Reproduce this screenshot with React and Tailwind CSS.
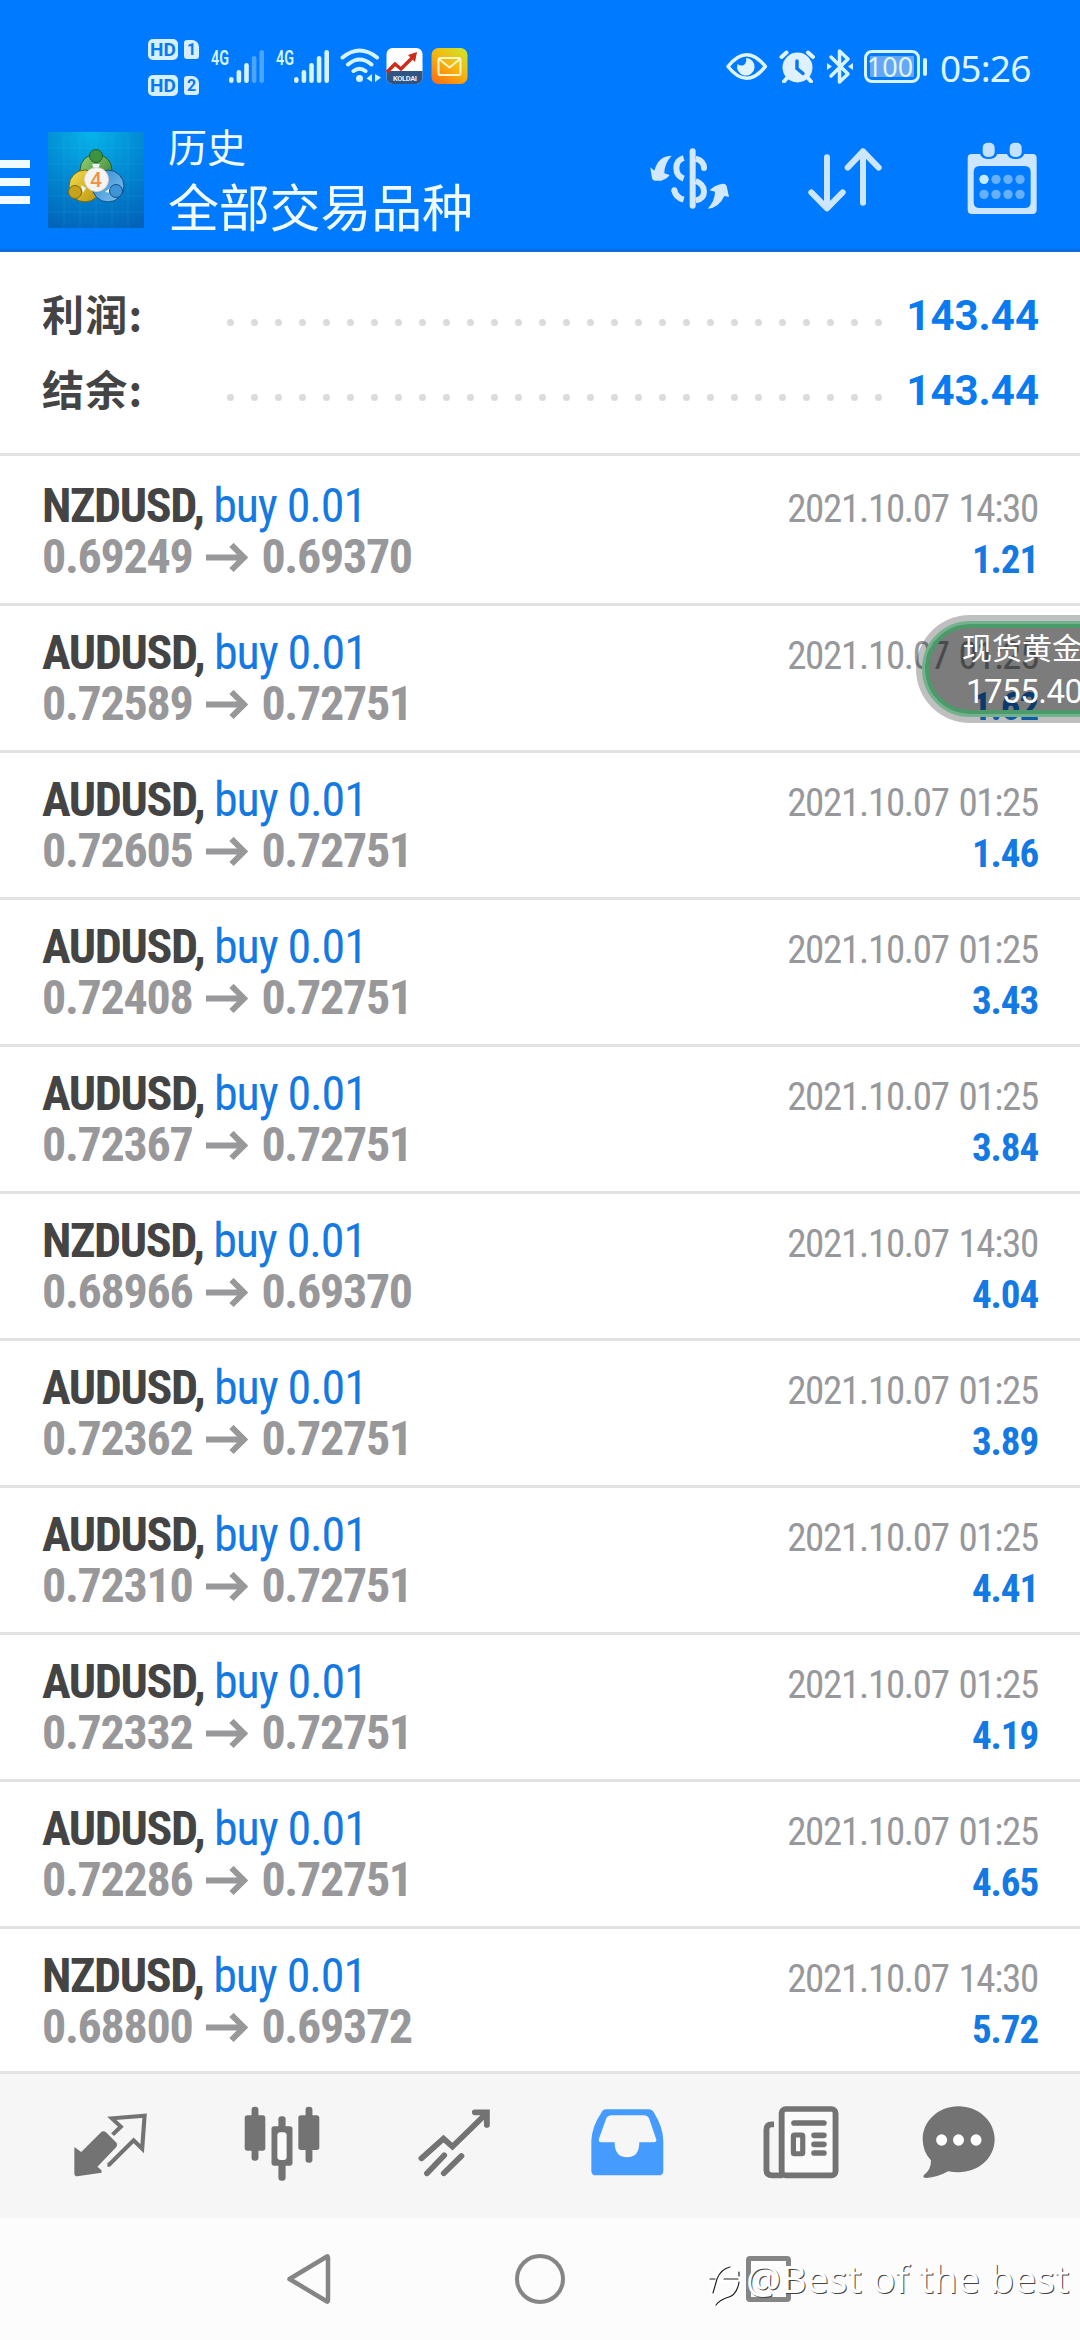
import React from 'react'

const deals = [
  { symbol: 'NZDUSD', open: '0.69249', close: '0.69370', time: '2021.10.07 14:30', profit: '1.21' },
  { symbol: 'AUDUSD', open: '0.72589', close: '0.72751', time: '2021.10.07 01:25', profit: '1.62' },
  { symbol: 'AUDUSD', open: '0.72605', close: '0.72751', time: '2021.10.07 01:25', profit: '1.46' },
  { symbol: 'AUDUSD', open: '0.72408', close: '0.72751', time: '2021.10.07 01:25', profit: '3.43' },
  { symbol: 'AUDUSD', open: '0.72367', close: '0.72751', time: '2021.10.07 01:25', profit: '3.84' },
  { symbol: 'NZDUSD', open: '0.68966', close: '0.69370', time: '2021.10.07 14:30', profit: '4.04' },
  { symbol: 'AUDUSD', open: '0.72362', close: '0.72751', time: '2021.10.07 01:25', profit: '3.89' },
  { symbol: 'AUDUSD', open: '0.72310', close: '0.72751', time: '2021.10.07 01:25', profit: '4.41' },
  { symbol: 'AUDUSD', open: '0.72332', close: '0.72751', time: '2021.10.07 01:25', profit: '4.19' },
  { symbol: 'AUDUSD', open: '0.72286', close: '0.72751', time: '2021.10.07 01:25', profit: '4.65' },
  { symbol: 'NZDUSD', open: '0.68800', close: '0.69372', time: '2021.10.07 14:30', profit: '5.72' },
]

const SimBadge = ({ slot }) => (
  <div className="flex items-center gap-[6px] h-[22px]">
    <span className="w-[30px] h-[21px] rounded-[5px] bg-[#d6efff] text-[#0a78f0] text-[19px] leading-[21px] font-bold text-center">HD</span>
    <span className="w-[15px] h-[19px] rounded-[3px] rounded-tr-[7px] bg-[#d6efff] text-[#0a78f0] text-[16px] leading-[19px] font-bold text-center">{slot}</span>
  </div>
)

const Signal = ({ level }) => (
  <svg className="w-[54px] h-[34px] overflow-visible" viewBox="0 0 54 34">
    <text x="0" y="15.5" fontSize="20" fontWeight="600" textLength="18" lengthAdjust="spacingAndGlyphs" fill="#d6f4ff">4G</text>
    {[6, 13, 20, 27, 33].map((h, i) => (
      <rect key={h} x={18 + i * 7.6} y={34 - h} width="4.6" height={h} rx="2.3" fill="#d6f4ff" opacity={i < level ? 1 : 0.35} />
    ))}
  </svg>
)

const StatusBar = () => (
  <div className="h-[112px] flex items-start text-[#dff4ff]">
    <div className="ml-[148px] mt-[38px] flex flex-col gap-[14px]">
      <SimBadge slot="1" />
      <SimBadge slot="2" />
    </div>
    <div className="ml-[12px] mt-[49px]"><Signal level={3} /></div>
    <div className="ml-[11px] mt-[49px]"><Signal level={5} /></div>
    {/* Wi-Fi */}
    <svg className="ml-[10px] mt-[48px] w-[41px] h-[35px]" viewBox="0 0 41 35" fill="none" stroke="#d6f4ff" strokeWidth="4" strokeLinecap="round">
      <path d="M2.500 9.500Q19.500-4.500 37 9.500M8 16.500Q19.500 6.500 31.500 16.500M13.500 23Q19.500 18.500 25.500 23" />
      <circle cx="19.500" cy="30.500" r="3.500" fill="#d6f4ff" stroke="none" />
      <path d="M32 26v8l-5.500-3.500zM35 34v-8l6 3.500z" stroke="none" fill="#d6f4ff" />
    </svg>
    {/* Notification icons */}
    <svg className="ml-[5px] mt-[48px] w-[37px] h-[37px]" viewBox="0 0 37 37">
      <rect x="0.500" y="0" width="36" height="36" rx="6" fill="#fff" />
      <path d="M.5 23h36v7a6 6 0 0 1-6 6h-24a6 6 0 0 1-6-6z" fill="#315583" />
      <path d="M1 24l8-8 6 5 12-12" fill="none" stroke="#cf2b1d" strokeWidth="3.500" />
      <path d="M22 7l9-3-2 10z" fill="#cf2b1d" />
      <text x="7" y="32.500" fontSize="7.500" fontWeight="700" fill="#e5edf5" textLength="24">KOLDAI</text>
    </svg>
    <svg className="ml-[8px] mt-[48px] w-[37px] h-[37px]" viewBox="0 0 37 37">
      <defs>
        <linearGradient id="mail" x1="0.200" y1="1" x2="0.900" y2="0">
          <stop offset="0" stopColor="#ff7412" />
          <stop offset="0.500" stopColor="#f7b40e" />
          <stop offset="1" stopColor="#cbe62a" />
        </linearGradient>
      </defs>
      <rect x="0.500" y="0" width="36" height="36" rx="7" fill="url(#mail)" />
      <rect x="7.500" y="10" width="22" height="17" rx="2" fill="none" stroke="#fff6c8" strokeWidth="2" />
      <path d="M8 11l10.500 8.500L29 11" fill="none" stroke="#fff6c8" strokeWidth="2" />
    </svg>
    {/* Eye comfort */}
    <svg className="ml-[258px] mt-[52px] w-[42px] h-[29px]" viewBox="0 0 42 29">
      <path d="M2 14.500Q20.500-9 39.500 14.500Q20.500 38 2 14.500z" fill="none" stroke="#dff4ff" strokeWidth="3.500" strokeLinejoin="round" />
      <path d="M20 6A8.800 8.800 0 1 1 11.500 12Q16 15 19 12Q21 9 20 6z" fill="#dff4ff" />
    </svg>
    {/* Alarm */}
    <svg className="ml-[11px] mt-[49px] w-[37px] h-[34px]" viewBox="0 0 37 34" fill="none" strokeLinecap="round">
      <circle cx="18.500" cy="18.500" r="15" fill="#dff0ff" />
      <path d="M2.500 8l5-4.500M34 8l-5-4.500M8 29l-3 3.500M29 29l3 3.500" stroke="#dff4ff" strokeWidth="4" />
      <path d="M18 12v7.500l6 5" stroke="#0a78f0" strokeWidth="3.500" />
    </svg>
    {/* Bluetooth */}
    <svg className="ml-[10px] mt-[48px] w-[28px] h-[37px]" viewBox="0 0 28 37">
      <path d="M5 9l17 17-8.500 8V3l8.500 8L5 28" fill="none" stroke="#d6f4ff" strokeWidth="3.500" strokeLinejoin="round" strokeLinecap="round" />
      <path d="M1 15l5 3.500-5 3.500zM27 15l-5 3.500 5 3.500z" fill="#d6f4ff" />
    </svg>
    {/* Battery */}
    <div className="ml-[10px] mt-[50px] flex items-center">
      <div className="w-[56px] h-[33px] p-[3px] rounded-[8px] border-[3px] border-[#d6f4ff]">
        <div className="h-full bg-[#64a8f4] text-[27px] leading-[22px] text-center font-['Noto_Sans',sans-serif]">
          <span className="inline-block -ml-1">100</span>
        </div>
      </div>
      <div className="ml-[3px] w-[4px] h-[18px] rounded-full bg-[#d6f4ff]" />
    </div>
    <span className="ml-[13px] mt-[44px] text-[37px] leading-[48px] tracking-[-0.8px] font-['Noto_Sans',sans-serif]">05:26</span>
  </div>
)

const AppLogo = () => (
  <svg className="w-[96px] h-[96px]" viewBox="0 0 96 96">
    <defs>
      <radialGradient id="sky" cx="0.450" cy="0" r="1.100">
        <stop offset="0" stopColor="#06b4ea" />
        <stop offset="0.550" stopColor="#0284cf" />
        <stop offset="1" stopColor="#0262b8" />
      </radialGradient>
      <linearGradient id="green" x1="0" y1="0" x2="1" y2="1">
        <stop offset="0" stopColor="#9bd27c" />
        <stop offset="1" stopColor="#2b7c28" />
      </linearGradient>
      <linearGradient id="gold" x1="0" y1="0" x2="1" y2="1">
        <stop offset="0" stopColor="#f5e04c" />
        <stop offset="1" stopColor="#b8900f" />
      </linearGradient>
      <linearGradient id="azure" x1="0" y1="0" x2="1" y2="1">
        <stop offset="0" stopColor="#2f86cf" />
        <stop offset="1" stopColor="#82c4ef" />
      </linearGradient>
    </defs>
    <rect width="96" height="96" fill="url(#sky)" />
    <path d="M16 0v96M32 0v96M48 0v96M64 0v96M80 0v96M0 16h96M0 32h96M0 48h96M0 64h96M0 80h96" stroke="#5cc4f4" strokeOpacity="0.120" />
    <circle cx="48" cy="38" r="16" fill="url(#green)" stroke="#1f5d33" />
    <circle cx="37" cy="54" r="16" fill="url(#gold)" stroke="#6e6418" />
    <circle cx="60" cy="54" r="16" fill="url(#azure)" stroke="#124d86" />
    <path d="M44 32h8l-2 5h-4zM33 53l5 3-3 5zM57 60l6-5v6z" fill="#eaf6ff" />
    <circle cx="48" cy="24" r="6.500" fill="#3d9440" stroke="#1f5d33" />
    <circle cx="27" cy="60" r="6.500" fill="#c9a21c" stroke="#7a6a14" />
    <circle cx="68" cy="59" r="6.500" fill="#3f94d8" stroke="#124d86" />
    <circle cx="48.500" cy="47.500" r="12" fill="#f6f4f2" stroke="#d9d4cf" />
    <text x="48" y="55" fontSize="21" fontWeight="500" textAnchor="middle" fill="#ee9347">4</text>
  </svg>
)

const AppBar = () => (
  <div className="h-[137px] flex items-start">
    <div className="mt-[48px] w-[30px] flex flex-col gap-[10px]">
      <div className="h-[8px] bg-[#f0fbff]" />
      <div className="h-[8px] bg-[#f0fbff]" />
      <div className="h-[8px] bg-[#f0fbff]" />
    </div>
    <div className="ml-[18px] mt-[20px]"><AppLogo /></div>
    <div className="ml-[24px] mt-[4px] w-[320px] flex flex-col text-[#f0fbff] font-['Noto_Sans_CJK_SC',sans-serif]">
      <span className="text-[39px] leading-[58px]">历史</span>
      <span className="text-[51px] leading-[62px] tracking-[-0.2px]">全部交易品种</span>
    </div>
    {/* Currency filter */}
    <svg className="ml-[161px] mt-[34px] w-[82px] h-[66px]" viewBox="88 106 246 198" fill="#d2e8ff">
      <path d="M156 135Q116 135 104 180L92 170L97 203Q99 210 106 210L125 210Q143 204 150 193L134 188Q134 158 156 135z" />
      <path d="M264 294Q298 292 314 256L328 259L321 226Q318 218 309 219Q282 224 270 239L286 243Q286 270 264 294z" />
      <rect x="210" y="113" width="18" height="181" rx="9" />
      <path d="M192 142Q170 149 170 172Q170 196 192 204M228 144Q253 151 253 172M228 211Q253 220 253 243Q253 264 228 269M164 239Q168 260 192 267" fill="none" stroke="#d2e8ff" strokeWidth="18" />
      <circle cx="253" cy="172" r="9" />
      <circle cx="164" cy="239" r="9" />
    </svg>
    {/* Sort */}
    <svg className="ml-[76px] mt-[35px] w-[76px] h-[66px]" viewBox="564 109 228 198" fill="none" stroke="#cde6ff" strokeWidth="18" strokeLinecap="round" strokeLinejoin="round">
      <path d="M624 140V293M577 245L624 293L671 245M732 276V122M686 171L732 122L779 171" />
    </svg>
    {/* Calendar */}
    <svg className="ml-[84px] mt-[30px] w-[70px] h-[73px]" viewBox="1042 96 210 219">
      <path fillRule="evenodd" fill="#cde6ff" d="M1056 132H1081Q1086 147 1107 147Q1128 147 1133 132H1162Q1167 147 1188 147Q1208 147 1214 132H1239Q1251 132 1251 144V299Q1251 312 1238 312H1057Q1044 312 1044 299V144Q1044 132 1056 132zM1080 168Q1062 168 1062 186V276Q1062 294 1080 294H1215Q1233 294 1233 276V186Q1233 168 1215 168z" />
      <rect x="1089" y="98" width="36" height="43" rx="15" fill="#c4e1ff" />
      <rect x="1170" y="98" width="36" height="43" rx="15" fill="#c4e1ff" />
      {[0, 1, 2, 3].map((i) => (
        <g key={i} fill="#66b0ff">
          <circle cx={1093 + i * 36} cy="208" r="14" fill={i === 0 ? '#c4ecff' : '#66b0ff'} />
          <circle cx={1093 + i * 36} cy="253" r="14" />
        </g>
      ))}
    </svg>
  </div>
)

const SummaryRow = ({ label, value }) => (
  <div className="h-[75px] flex items-center">
    <span className="w-[185px] -mt-[4px] text-[42px] leading-[75px] font-bold tracking-[1.2px] text-[#444] font-['Noto_Sans_CJK_SC',sans-serif]">{label}</span>
    <div className="w-[655px] mt-[16px] flex justify-between">
      {Array.from({ length: 28 }, (_, i) => (
        <span key={i} className="w-[7px] h-[7px] rounded-full bg-[#dcdcdc]" />
      ))}
    </div>
    <span className="ml-auto -mr-[1px] mt-[2px] text-[42px] leading-[75px] font-bold text-[#097bf0]">{value}</span>
  </div>
)

const DealRow = ({ deal }) => (
  <div className="h-[147px] shrink-0 pt-[21px] px-[42px] border-b-[3px] border-[#e2e2e2] font-stretch-condensed">
    <div className="h-[51px] flex items-baseline justify-between leading-[51px]">
      <span className="text-[48px] font-bold tracking-[-1.4px] text-[#444]">
        {deal.symbol}, <span className="font-normal tracking-[-1.1px] text-[#1479e2]">buy 0.01</span>
      </span>
      <span className="text-[39px] tracking-[-1.3px] [word-spacing:2px] text-[#97989b]">{deal.time}</span>
    </div>
    <div className="h-[51px] flex items-baseline justify-between leading-[51px]">
      <span className="text-[48px] font-bold tracking-[-1.3px] text-[#98989a]">
        {deal.open}
        <svg className="inline-block ml-[14px] mr-[13px] w-[42px] h-[30px] align-baseline" viewBox="0 0 42 30" fill="none" stroke="currentColor" strokeWidth="6">
          <path d="M0 14.500H38M25.500 2L38 14.500L25.500 27" />
        </svg>
        {deal.close}
      </span>
      <span className="text-[39px] font-bold tracking-[-1.1px] text-[#1479e2]">{deal.profit}</span>
    </div>
  </div>
)

const QuoteBubble = () => (
  <div className="absolute left-[916px] top-[615px] w-[240px] h-[108px] rounded-full bg-black/25 p-[6px]">
    <div className="h-full rounded-full border-[3px] border-[#73b28d]">
      <div className="h-full rounded-full border-[4px] border-[#4b9b6a] bg-black/35 pl-[33px] text-white whitespace-nowrap">
        <div className="text-[30px] leading-[37px] font-['Noto_Sans_CJK_SC',sans-serif]">现货黄金</div>
        <div className="ml-[4px] text-[33px] leading-[53px] tracking-[-0.5px]">1755.40</div>
      </div>
    </div>
  </div>
)

const TabBar = () => (
  <div className="h-[147px] shrink-0 border-t-[3px] border-[#e4e4e4] bg-[#f6f6f6] flex items-start text-[#737373]">
    {/* Quotes */}
    <svg className="ml-[74px] mt-[38px] w-[73px] h-[66px]" viewBox="214 215 212 198" preserveAspectRatio="none">
      <path d="M215 320L235 335L291 277Q299 269 307 276L338 308Q341 314 337 320L282 379L294 390V397L223 408Q215 407 215 400z" fill="currentColor" />
      <path d="M311 373H316L387 300L412 325L419 226L324 234L350 259L326 283" fill="none" stroke="currentColor" strokeWidth="12" />
    </svg>
    {/* Charts */}
    <svg className="ml-[97px] mt-[32px] w-[76px] h-[76px]" viewBox="707 199 221 228" preserveAspectRatio="none" fill="currentColor">
      <rect x="729" y="201" width="20" height="162" rx="9" />
      <rect x="709" y="227" width="60" height="106" rx="8" />
      <rect x="886" y="201" width="20" height="168" rx="9" />
      <rect x="865" y="227" width="61" height="104" rx="8" />
      <rect x="807" y="230" width="21" height="193" rx="9" />
      <rect x="787" y="260" width="61" height="118" rx="8" />
      <rect x="804" y="278" width="27" height="83" rx="9" fill="#fbfbfb" />
    </svg>
    {/* Trade */}
    <svg className="ml-[98px] mt-[35px] w-[73px] h-[68px]" viewBox="1211 208 212 204" preserveAspectRatio="none" fill="none" stroke="currentColor" strokeLinecap="round">
      <path d="M1221 356L1285 297L1311 321L1411 220M1376 218H1411V256" strokeWidth="17" />
      <path d="M1237 401L1287 347M1286 401L1337 349" strokeWidth="17" />
    </svg>
    {/* History, the active tab */}
    <svg className="ml-[100px] mt-[35px] w-[73px] h-[67px]" viewBox="145 209 213 201" preserveAspectRatio="none">
      <path fillRule="evenodd" fill="#459cfe" d="M189 210H312Q323 210 329 220Q356 265 356 305V394Q356 408 342 408H160Q146 408 146 394V305Q147 263 175 220Q180 210 189 210zM205 228Q193 228 189 239L168 299Q166 309 175 309H214Q214 354 250 354Q286 354 286 309H328Q338 309 335 299L315 239Q311 228 299 228z" />
    </svg>
    {/* News */}
    <svg className="ml-[99px] mt-[32px] w-[76px] h-[73px]" viewBox="645 200 220 219" preserveAspectRatio="none" fill="none" stroke="currentColor" strokeWidth="17">
      <rect x="699" y="209" width="156" height="199" rx="12" fill="#fbfbfb" />
      <path d="M677 255H670Q655 255 655 272V392Q655 408 672 408H702" />
      <path d="M735 251H821M793 288H821M793 315H821M793 341H821" strokeLinecap="round" />
      <rect x="733" y="287" width="27" height="56" rx="3" strokeWidth="15" />
    </svg>
    {/* Chat */}
    <svg className="ml-[83px] mt-[32px] w-[73px] h-[73px]" viewBox="1107 200 212 219" preserveAspectRatio="none">
      <path fill="currentColor" d="M1213 201C1271 201 1318 245 1318 300C1318 358 1269 399 1213 399Q1197 399 1183 396Q1152 414 1119 416Q1108 416 1112 408Q1134 391 1133 363Q1109 337 1109 300C1109 245 1155 201 1213 201z" />
      <g fill="#fff">
        <ellipse cx="1164" cy="302" rx="16" ry="17" />
        <ellipse cx="1213" cy="302" rx="16" ry="17" />
        <ellipse cx="1264" cy="302" rx="16" ry="17" />
      </g>
    </svg>
  </div>
)

const SystemNav = () => (
  <div className="relative h-[122px] shrink-0 bg-[#fcfcfc] flex items-start">
    <svg className="ml-[286px] mt-[34px] w-[46px] h-[54px]" viewBox="0 0 46 54" fill="none" stroke="#858585" strokeWidth="4.500" strokeLinejoin="round">
      <path d="M3.500 27L41 4.500Q42 4 42 6V48Q42 50 41 49.500z" />
    </svg>
    <div className="ml-[183px] mt-[36px] w-[50px] h-[50px] rounded-full border-[4.5px] border-[#858585]" />
    <div className="ml-[181px] mt-[38px] w-[45px] h-[46px] rounded-[4px] border-[5px] border-[#858585]" />
    {/* Signature */}
    <div className="absolute left-[708px] top-[29px] flex items-start text-white">
      <svg className="mt-[17px] w-[34px] h-[44px]" viewBox="0 0 34 44" fill="none" strokeLinecap="round">
        <path d="M5 28Q7 8 18 4Q29 2 30 16Q30 32 17 34L9 40M3 16H28" stroke="#fff" strokeWidth="5" />
        <path d="M5 29L9 15Q13 5 22 3M2 15H7M16 15H30M31 18Q29 32 18 34Q12 36 8 41M31 8V12" stroke="#222" strokeWidth="1.200" />
      </svg>
      <span className="ml-[4px] text-[39px] leading-[62px] whitespace-nowrap tracking-[0.1px] font-['Noto_Sans',sans-serif] [text-shadow:1px_1px_0_#444]">@Best of the best</span>
    </div>
  </div>
)

const App = () => (
  <div className="relative w-[1080px] h-[2340px] overflow-hidden flex flex-col bg-white font-['Roboto',sans-serif]">
    <div className="h-[252px] shrink-0 bg-[#007aff] border-b-[3px] border-[#106ddc]">
      <StatusBar />
      <AppBar />
    </div>

    <div className="h-[204px] shrink-0 pt-[25px] px-[42px] border-b-[3px] border-[#e2e2e2]">
      <SummaryRow label="利润:" value="143.44" />
      <SummaryRow label="结余:" value="143.44" />
    </div>

    <div className="h-[1615px] shrink-0 pt-[3px] flex flex-col overflow-hidden">
      {deals.map((deal, i) => (
        <DealRow key={i} deal={deal} />
      ))}
    </div>

    <TabBar />
    <SystemNav />
    <QuoteBubble />
  </div>
)

export default App
